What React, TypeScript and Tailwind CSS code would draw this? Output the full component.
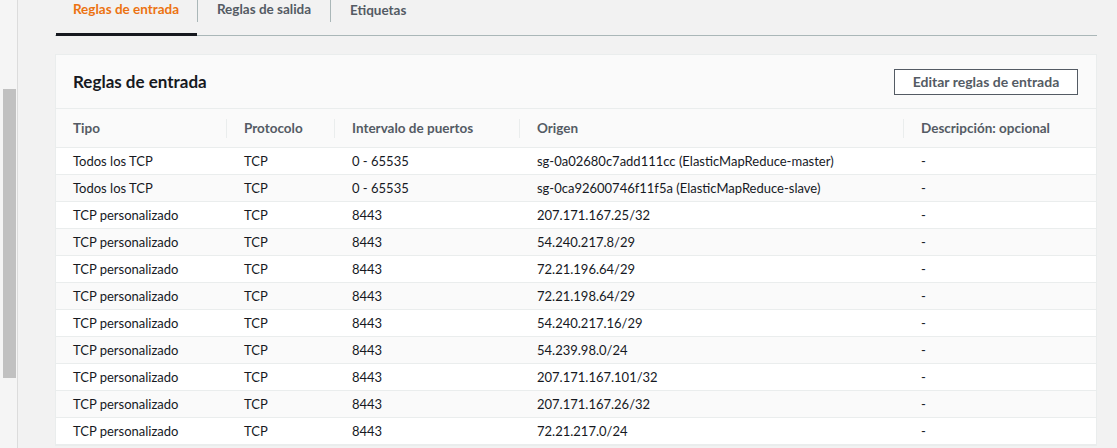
import React from "react";

const rows = [
  ["Todos los TCP", "TCP", "0 - 65535", "sg-0a02680c7add111cc (ElasticMapReduce-master)"],
  ["Todos los TCP", "TCP", "0 - 65535", "sg-0ca92600746f11f5a (ElasticMapReduce-slave)"],
  ["TCP personalizado", "TCP", "8443", "207.171.167.25/32"],
  ["TCP personalizado", "TCP", "8443", "54.240.217.8/29"],
  ["TCP personalizado", "TCP", "8443", "72.21.196.64/29"],
  ["TCP personalizado", "TCP", "8443", "72.21.198.64/29"],
  ["TCP personalizado", "TCP", "8443", "54.240.217.16/29"],
  ["TCP personalizado", "TCP", "8443", "54.239.98.0/24"],
  ["TCP personalizado", "TCP", "8443", "207.171.167.101/32"],
  ["TCP personalizado", "TCP", "8443", "207.171.167.26/32"],
  ["TCP personalizado", "TCP", "8443", "72.21.217.0/24"],
];

const widths = ["w-[170px]", "w-[108px]", "w-[185px]", "w-[384px]", "flex-1"];
const headers = ["Tipo", "Protocolo", "Intervalo de puertos", "Origen", "Descripción: opcional"];

export default function App() {
  return (
    <div
      className="flex h-[448px] w-[1117px] overflow-hidden bg-[#f2f2f2] text-[13px] text-[#16191f]"
      style={{ fontFamily: 'Lato, "Liberation Sans", Arial, sans-serif' }}
    >
      {/* scrollbar strip */}
      <div className="w-[17px] shrink-0 bg-[#f5f5f5] pl-[3px] pt-[89px]">
        <div className="h-[289px] w-[13px] bg-[#c1c1c1]" />
      </div>
      <div className="w-px shrink-0 bg-[#dcdcdc]" />

      <div className="flex flex-1 flex-col pl-[37px] pr-[20px]">
        {/* Tabs */}
        <div className="flex h-[36px] border-b border-[#aab7b8]">
          <div className="relative flex h-[35px] w-[142px] items-start justify-center pt-[1px]">
            <span className="text-[13.5px] font-bold leading-[16px] text-[#ec7211]">Reglas de entrada</span>
            <div className="absolute bottom-[-1px] left-px right-0 h-[3px] bg-[#16191f]" />
          </div>
          <div className="h-[22px] w-px bg-[#aab7b8]" />
          <div className="flex w-[132px] justify-center pt-[1px]">
            <span className="text-[13.5px] font-bold leading-[16px] text-[#545b64]">Reglas de salida</span>
          </div>
          <div className="h-[22px] w-px bg-[#aab7b8]" />
          <div className="pl-[19px] pt-[1px]">
            <span className="text-[13.5px] font-bold leading-[16px] text-[#545b64]">Etiquetas</span>
          </div>
        </div>

        {/* Card */}
        <div className="mt-[18px] border border-[#eaeded] bg-white">
          <div className="flex h-[54px] items-center justify-between border-b border-[#eaeded] bg-[#fafafa] pl-[17px] pr-[18px]">
            <h2 className="text-[17px] font-bold text-[#16191f]">Reglas de entrada</h2>
            <button className="h-[26px] w-[184px] border border-[#545b64] bg-white text-[14px] font-bold text-[#545b64]">
              Editar reglas de entrada
            </button>
          </div>

          <div className="flex h-[39px] items-center border-b border-[#eaeded] bg-[#fafafa] pt-px">
            {headers.map((h, i) => (
              <div key={h} className={`${widths[i]} flex h-[19px] items-center ${i > 0 ? "border-l border-[#eaeded]" : ""} pl-[17px]`}>
                <span className="text-[13.5px] font-bold text-[#545b64]">{h}</span>
              </div>
            ))}
          </div>

          {rows.map((r, ri) => (
            <div
              key={ri}
              className={`flex h-[27px] items-center border-b border-[#eaeded] pt-[2px] ${ri % 2 === 1 ? "bg-[#fafafa]" : "bg-white"}`}
            >
              {[...r, "-"].map((c, i) => (
                <div key={i} className={`${widths[i]} ${i > 0 ? "pl-[18px]" : "pl-[17px]"} whitespace-nowrap`}>
                  {c}
                </div>
              ))}
            </div>
          ))}
        </div>
      </div>
    </div>
  );
}
